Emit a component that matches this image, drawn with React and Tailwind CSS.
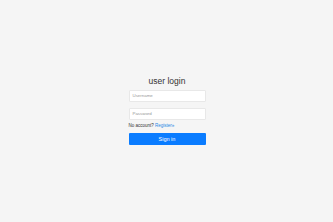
export default function App() {
  return (
    <div className="w-[333px] h-[222px] bg-[#f5f5f5] flex flex-col items-center" style={{fontFamily: '"Liberation Sans", Arial, sans-serif'}}>
      <div className="w-[77px] mt-[76px] ml-[1px] flex flex-col">
        <h1 className="text-[8.5px] leading-[10px] text-center text-[#333] mb-[4px]">user login</h1>
        <div className="h-[12px] bg-white border border-[#e8e8e8] rounded-[1px] flex items-center px-[3px] text-[4.4px] text-[#999]">Username</div>
        <div className="h-[12px] mt-[6px] bg-white border border-[#e8e8e8] rounded-[1px] flex items-center px-[3px] text-[4.4px] text-[#999]">Password</div>
        <div className="mt-[3px] text-[4.5px] leading-[6px] text-[#333]">No account? <span className="text-[#1e88e5]">Register»</span></div>
        <div className="mt-[4px] h-[12px] bg-[#0a7cff] rounded-[1px] flex items-center justify-center text-white text-[5.5px]">Sign in</div>
      </div>
    </div>
  );
}
